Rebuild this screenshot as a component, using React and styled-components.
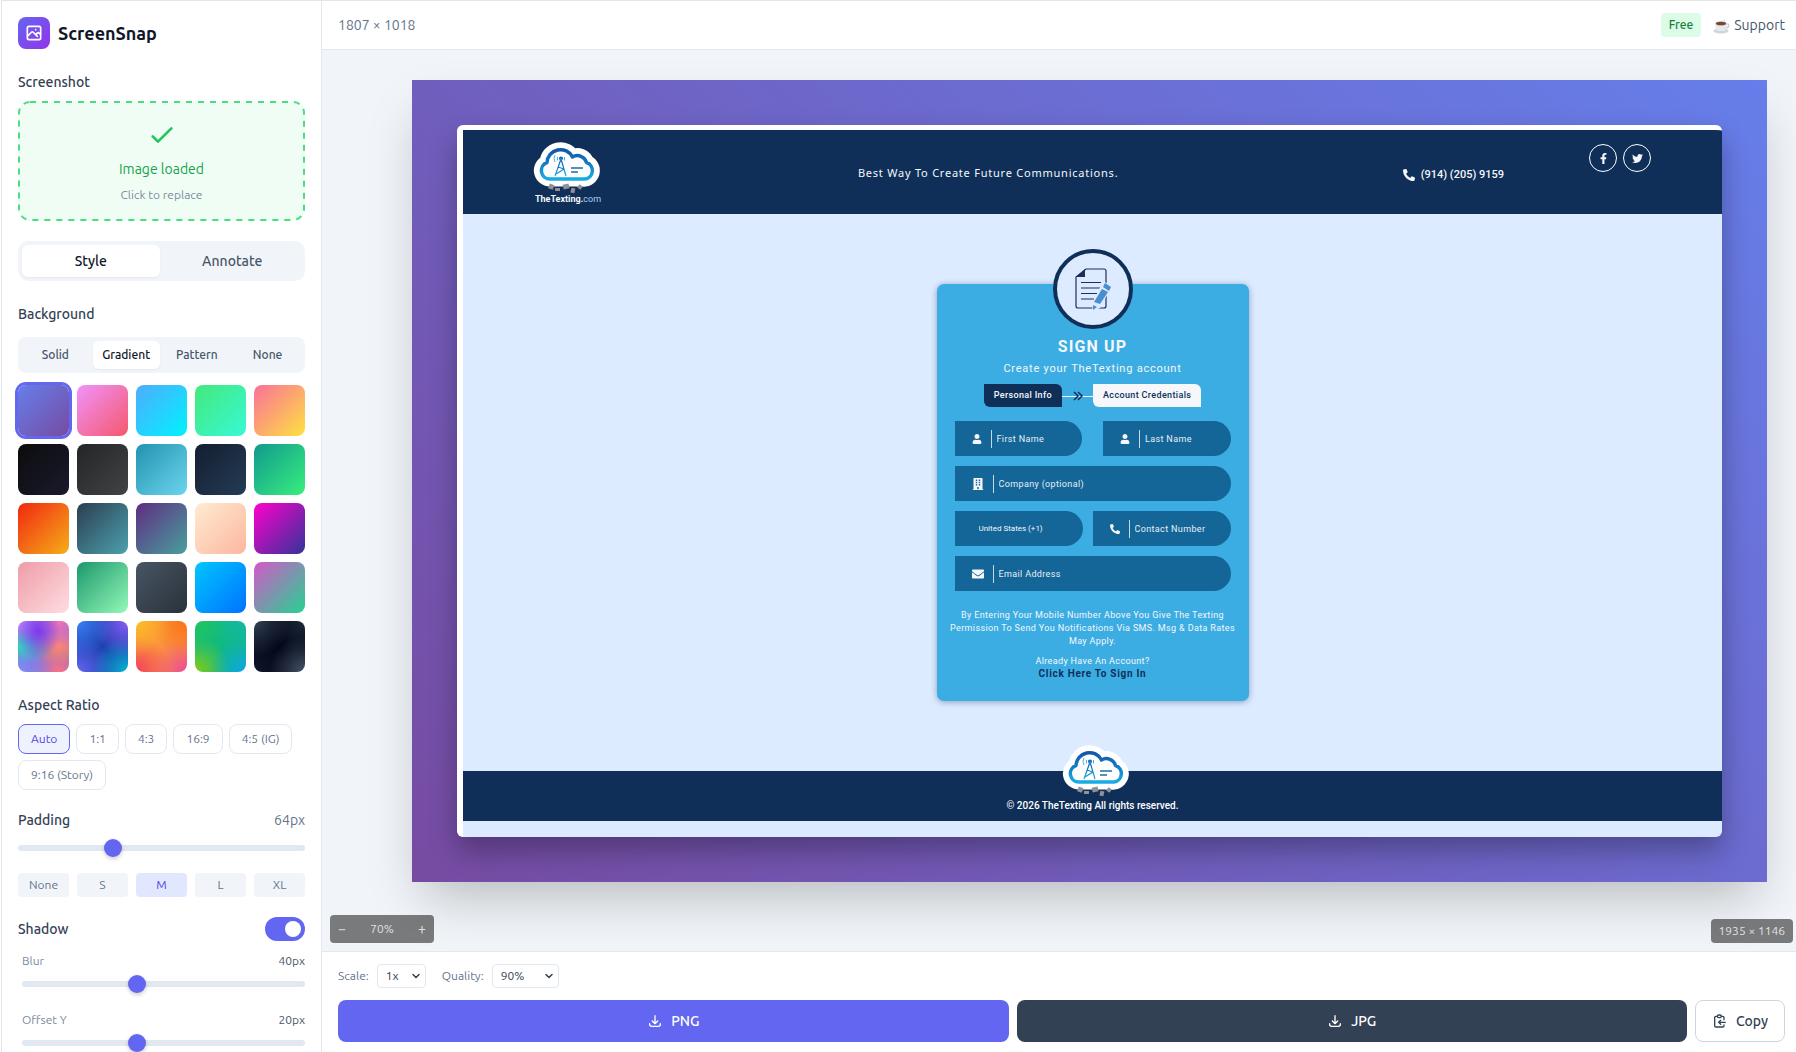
import React, { useState } from "react";
import styled, { createGlobalStyle, css } from 'styled-components';
import { ChevronDown } from "lucide-react";
import { FaBuilding, FaEnvelope, FaFacebookF, FaPhoneAlt, FaTwitter, FaUser } from "react-icons/fa";

const gradients = [
    'linear-gradient(135deg, #667eea, #764ba2)',
    'linear-gradient(135deg, #f093fb, #f5576c)',
    'linear-gradient(135deg, #4facfe, #00f2fe)',
    'linear-gradient(135deg, #43e97b, #38f9d7)',
    'linear-gradient(135deg, #fa709a, #fee140)',
    'linear-gradient(135deg, #0c0c0c, #1a1a2e)',
    'linear-gradient(135deg, #232526, #414345)',
    'linear-gradient(135deg, #2193b0, #6dd5ed)',
    'linear-gradient(135deg, #141e30, #243b55)',
    'linear-gradient(135deg, #11998e, #38ef7d)',
    'linear-gradient(135deg, #f12711, #f5af19)',
    'linear-gradient(135deg, #2c3e50, #4ca1af)',
    'linear-gradient(135deg, #5f2c82, #49a09d)',
    'linear-gradient(135deg, #ffecd2, #fcb69f)',
    'linear-gradient(135deg, #ff00cc, #333399)',
    'linear-gradient(135deg, #ee9ca7, #ffdde1)',
    'linear-gradient(135deg, #1d976c, #93f9b9)',
    'linear-gradient(135deg, #485563, #29323c)',
    'linear-gradient(135deg, #00c6ff, #0072ff)',
    'linear-gradient(135deg, #d558c8, #24d292)',
    'radial-gradient(at 40% 20%, #7c3aed 0, transparent 50%), radial-gradient(at 80% 0%, #f472b6 0, transparent 50%), radial-gradient(at 0% 50%, #2dd4bf 0, transparent 50%), radial-gradient(at 80% 50%, #fb8c5a 0, transparent 50%), radial-gradient(at 0% 100%, #818cf8 0, transparent 50%), radial-gradient(at 80% 100%, #fb7185 0, transparent 50%), radial-gradient(at 0% 0%, #c084fc 0, transparent 50%), #7c6fd8',
    'radial-gradient(at 0% 0%, #3b82f6 0, transparent 50%), radial-gradient(at 100% 0%, #8b5cf6 0, transparent 50%), radial-gradient(at 100% 100%, #06b6d4 0, transparent 50%), radial-gradient(at 0% 100%, #6366f1 0, transparent 50%), #1e40af',
    'radial-gradient(at 0% 0%, #fbbf24 0, transparent 50%), radial-gradient(at 100% 0%, #f97316 0, transparent 50%), radial-gradient(at 100% 100%, #ec4899 0, transparent 50%), radial-gradient(at 0% 100%, #f43f5e 0, transparent 50%), #fb923c',
    'radial-gradient(at 0% 0%, #22c55e 0, transparent 50%), radial-gradient(at 100% 0%, #14b8a6 0, transparent 50%), radial-gradient(at 100% 100%, #0ea5e9 0, transparent 50%), radial-gradient(at 0% 100%, #84cc16 0, transparent 50%), #10b981',
    'radial-gradient(at 0% 0%, #334155 0, transparent 50%), radial-gradient(at 100% 0%, #1e293b 0, transparent 50%), radial-gradient(at 100% 100%, #475569 0, transparent 50%), radial-gradient(at 0% 100%, #0f172a 0, transparent 50%), #020617',
]

const ratios = ['Auto', '1:1', '4:3', '16:9', '4:5 (IG)', '9:16 (Story)']
const paddings = [['None', 0], ['S', 32], ['M', 64], ['L', 96], ['XL', 128]]

function Icon({ size, d, width = 2 }) {
    return (
        <svg width={size} height={size} viewBox="0 0 24 24" fill="none" stroke="currentColor" strokeWidth={width} strokeLinecap="round" strokeLinejoin="round" aria-hidden="true">
            <path d={d} />
        </svg>
    )
}

const photoPath = "M4 16l4.586-4.586a2 2 0 012.828 0L16 16m-2-2l1.586-1.586a2 2 0 012.828 0L20 14m-6-6h.01M6 20h12a2 2 0 002-2V6a2 2 0 00-2-2H6a2 2 0 00-2 2v12a2 2 0 002 2z"
const downloadPath = "M4 16v1a3 3 0 003 3h10a3 3 0 003-3v-1m-4-4l-4 4m0 0l-4-4m4 4V4"
const copyPath = "M8 5H6a2 2 0 00-2 2v12a2 2 0 002 2h10a2 2 0 002-2v-1M8 5a2 2 0 002 2h2a2 2 0 002-2M8 5a2 2 0 012-2h2a2 2 0 012 2m0 0h2a2 2 0 012 2v3m2 4H10m0 0l3-3m-3 3l3 3"

function CloudLogo({ id }) {
    const cloud = "M17 38H52a8.500 8.500 0 0 0 1.500-16.500a9.500 9.500 0 0 0-14-5.500a13.500 13.500 0 0 0-25.500 5.500a8.500 8.500 0 0 0 3 16.500z"
    return (
        <svg width="70" height="53" viewBox="0 0 70 53" fill="none" aria-hidden="true">
            <defs>
                <linearGradient id={id} x1="0" y1="0" x2="0" y2="1">
                    <stop offset="0" stopColor="#1257a8" />
                    <stop offset="0.5" stopColor="#157fc4" />
                    <stop offset="1" stopColor="#19ace4" />
                </linearGradient>
            </defs>
            <path d={cloud} fill="#fff" stroke="#fff" strokeWidth="15" strokeLinejoin="round" />
            <path d="M17 40H52V45.500H46L30 43L17 45.500z" fill="#fff" />
            <path d={cloud} stroke={`url(#${id})`} strokeWidth="3.500" strokeLinejoin="round" />
            <g fill="#8f9194">
                <rect x="16" y="43" width="5" height="5" transform="rotate(20 18 45)" />
                <rect x="22" y="47" width="5" height="3" />
                <rect x="30" y="43" width="6" height="5" transform="rotate(-12 33 45)" />
                <rect x="38" y="47" width="4" height="5" transform="rotate(12 40 49)" />
                <rect x="45" y="44" width="4" height="4" transform="rotate(35 47 46)" />
            </g>
            <g stroke={`url(#${id})`} strokeWidth="1.200">
                <path d="M28 18L22 35M28 18L33 35M25 26L31 28M31 28L23 33" />
                <circle cx="28" cy="17.500" r="1.500" fill="#1672b8" />
            </g>
            <path d="M24.500 16v3.500M31.500 16v3.500M22 14q-2 3.500 0 7" stroke="#4bb0dc" />
            <path d="M38 27H50M38 31H45" stroke="#1c6f9f" strokeWidth="1.500" />
        </svg>
    )
}

function DocumentIcon() {
    return (
        <svg width="38" height="44" viewBox="0 0 38 44" fill="none" aria-hidden="true">
            <path d="M12 2H30Q32 2 32 4V39Q32 41 30 41H4Q2 41 2 39V10z" stroke="#1f2d5c" strokeWidth="1.200" />
            <path d="M11 2V10H2z" fill="#1f2d5c" />
            <path d="M7 15.500H27M7 21H27M7 26.500H23M7 32H20" stroke="#1f2d5c" strokeWidth="1.200" />
            <path d="M18 44l1-9L29 14l9 5L26 41z" fill="#dcebff" />
            <path d="M20 35L28 22L34 25L26 37z" fill="#478dcf" />
            <path d="M29 20L31 16L37 20L35 24z" fill="#478dcf" />
            <path d="M19 38V43L23 40z" fill="#478dcf" />
        </svg>
    )
}

function CupIcon() {
    return (
        <svg width="17" height="17" viewBox="0 0 17 17" fill="none" aria-hidden="true">
            <path d="M9 4Q12 3 11 1Q13 3 11 5" fill="#dde3e8" />
            <ellipse cx="8" cy="14" rx="7.500" ry="2.400" fill="#cfd5da" />
            <path d="M13 7h2q2 2-1 4h-2" stroke="#c4cbd0" strokeWidth="1.200" />
            <path d="M2 6h12q0 6-3 8H5Q2 12 2 6z" fill="#e6eaed" />
            <ellipse cx="8" cy="6.500" rx="6" ry="2.400" fill="#d3d8dc" />
            <ellipse cx="8" cy="6.500" rx="5" ry="1.800" fill="#7a4334" />
        </svg>
    )
}

function TextField({ id, icon, label, type = 'text' }) {
    return (
        <Field>
            <FieldLabel htmlFor={id} aria-label={label}>{icon}</FieldLabel>
            <FieldInput id={id} type={type} placeholder={label} />
        </Field>
    )
}

function SignupPage() {
    return (
        <Shot>
            <SiteHeader>
                <Brand>
                    <CloudLogo id="cloudTop" />
                    <BrandName>TheTexting.<span>com</span></BrandName>
                </Brand>
                <Tagline>Best Way To Create Future Communications.</Tagline>
                <Phone><FaPhoneAlt size={12} />(914) (205) 9159</Phone>
                <Socials>
                    <SocialLink href="#facebook" aria-label="Facebook"><FaFacebookF size={11} /></SocialLink>
                    <SocialLink href="#twitter" aria-label="Twitter"><FaTwitter size={11} /></SocialLink>
                </Socials>
            </SiteHeader>
            <SiteBody>
                <SignupCard>
                    <CardBadge><DocumentIcon /></CardBadge>
                    <CardTitle>SIGN UP</CardTitle>
                    <CardSubtitle>Create your TheTexting account</CardSubtitle>
                    <Steps>
                        <Step $active>Personal Info</Step>
                        <StepLine>
                            <svg width="31" height="10" viewBox="0 0 31 10" fill="none" aria-hidden="true">
                                <path d="M0 5.500H31" stroke="#f5f7fa" />
                                <path d="M12 1l4 4l-4 4M16 1l4 4l-4 4" stroke="#0f2f59" strokeWidth="1.500" />
                            </svg>
                        </StepLine>
                        <Step>Account Credentials</Step>
                    </Steps>
                    <Fields>
                        <FieldRow $gap="21px">
                            <TextField id="first" icon={<FaUser size={10} />} label="First Name" />
                            <TextField id="last" icon={<FaUser size={10} />} label="Last Name" />
                        </FieldRow>
                        <TextField id="company" icon={<FaBuilding size={12} />} label="Company (optional)" />
                        <FieldRow $gap="10px" $wide>
                            <Field>
                                <Country aria-label="Country" defaultValue="us">
                                    <option value="us">United States (+1)</option>
                                </Country>
                            </Field>
                            <TextField id="contact" type="tel" icon={<FaPhoneAlt size={10} />} label="Contact Number" />
                        </FieldRow>
                        <TextField id="email" type="email" icon={<FaEnvelope size={12} />} label="Email Address" />
                    </Fields>
                    <Consent>By Entering Your Mobile Number Above You Give The Texting Permission To Send You Notifications Via SMS. Msg &amp; Data Rates May Apply.</Consent>
                    <Already>Already Have An Account?</Already>
                    <SignInLink href="#signin">Click Here To Sign In</SignInLink>
                </SignupCard>
            </SiteBody>
            <SiteFooter>
                <FooterLogo><CloudLogo id="cloudBottom" /></FooterLogo>
                © 2026 TheTexting All rights reserved.
            </SiteFooter>
        </Shot>
    )
}

export default function App() {
    const [tab, setTab] = useState('Style')
    const [bgType, setBgType] = useState('Gradient')
    const [gradient, setGradient] = useState(0)
    const [ratio, setRatio] = useState('Auto')
    const [padding, setPadding] = useState(64)
    const [shadow, setShadow] = useState(true)
    const [blur, setBlur] = useState(40)
    const [offset, setOffset] = useState(20)

    return (
        <>
            <GlobalStyle />
            <Layout>
                <Sidebar>
                    <Logo>
                        <LogoMark><Icon size={20} d={photoPath} /></LogoMark>
                        <h1>ScreenSnap</h1>
                    </Logo>

                    <Section $space="20px">
                        <Label>Screenshot</Label>
                        <DropZone type="button">
                            <DashedEdge aria-hidden="true"><rect /></DashedEdge>
                            <Icon size={32} d="M5 13l4 4L19 7" />
                            <strong>Image loaded</strong>
                            <small>Click to replace</small>
                        </DropZone>
                    </Section>

                    <Tabs>
                        {['Style', 'Annotate'].map((name) =>
                            <Tab key={name} $active={tab === name} onClick={() => setTab(name)}>{name}</Tab>
                        )}
                    </Tabs>

                    <Section $space="24px">
                        <Label $space="14px">Background</Label>
                        <Tabs $small>
                            {['Solid', 'Gradient', 'Pattern', 'None'].map((name) =>
                                <Tab key={name} $small $active={bgType === name} onClick={() => setBgType(name)}>{name}</Tab>
                            )}
                        </Tabs>
                        <Swatches>
                            {gradients.map((bg, i) =>
                                <Swatch key={bg} aria-label={`Gradient ${i + 1}`} $bg={bg} $active={gradient === i} onClick={() => setGradient(i)} />
                            )}
                        </Swatches>
                    </Section>

                    <Section $space="20px">
                        <Label>Aspect Ratio</Label>
                        <Ratios>
                            {ratios.map((name) =>
                                <Ratio key={name} $active={ratio === name} onClick={() => setRatio(name)}>{name}</Ratio>
                            )}
                        </Ratios>
                    </Section>

                    <Section $space="20px">
                        <Between>
                            <Label as="label" htmlFor="padding" $space="0">Padding</Label>
                            <Value>{padding}px</Value>
                        </Between>
                        <Slider id="padding" type="range" min="0" max="200" value={padding} onChange={(e) => setPadding(Number(e.target.value))} />
                        <Swatches>
                            {paddings.map(([name, size]) =>
                                <Preset key={name} $active={padding === size} onClick={() => setPadding(size)}>{name}</Preset>
                            )}
                        </Swatches>
                    </Section>

                    <Between>
                        <Label as="label" htmlFor="shadow" $space="0">Shadow</Label>
                        <Toggle id="shadow" type="checkbox" checked={shadow} onChange={() => setShadow(!shadow)} />
                    </Between>
                    <ShadowOptions>
                        <Between>
                            <SmallLabel htmlFor="blur">Blur</SmallLabel>
                            <Value $small>{blur}px</Value>
                        </Between>
                        <Slider id="blur" type="range" min="0" max="100" value={blur} onChange={(e) => setBlur(Number(e.target.value))} />
                        <Between>
                            <SmallLabel htmlFor="offset">Offset Y</SmallLabel>
                            <Value $small>{offset}px</Value>
                        </Between>
                        <Slider id="offset" type="range" min="0" max="50" value={offset} onChange={(e) => setOffset(Number(e.target.value))} />
                    </ShadowOptions>
                </Sidebar>

                <Main>
                    <TopBar>
                        <span>1807 × 1018</span>
                        <TopRight>
                            <FreeTag>Free</FreeTag>
                            <SupportLink href="#support"><CupIcon />Support</SupportLink>
                        </TopRight>
                    </TopBar>
                    <Canvas>
                        <Frame><SignupPage /></Frame>
                        <ZoomBox>
                            <ZoomButton aria-label="Zoom out">−</ZoomButton>
                            <span>70%</span>
                            <ZoomButton aria-label="Zoom in">+</ZoomButton>
                        </ZoomBox>
                        <SizeTag>1935 × 1146</SizeTag>
                    </Canvas>
                    <ExportBar>
                        <Options>
                            <OptionLabel htmlFor="scale">Scale:</OptionLabel>
                            <SelectBox>
                                <Select id="scale" $width="49px" defaultValue="1x"><option>1x</option><option>2x</option><option>3x</option></Select>
                                <ChevronDown size={12} strokeWidth={3} />
                            </SelectBox>
                            <OptionLabel htmlFor="quality">Quality:</OptionLabel>
                            <SelectBox>
                                <Select id="quality" $width="67px" defaultValue="90%"><option>80%</option><option>90%</option><option>100%</option></Select>
                                <ChevronDown size={12} strokeWidth={3} />
                            </SelectBox>
                        </Options>
                        <Actions>
                            <ExportButton $bg="#6366f1"><Icon size={16} d={downloadPath} />PNG</ExportButton>
                            <ExportButton $bg="#334155"><Icon size={16} d={downloadPath} />JPG</ExportButton>
                            <CopyButton><Icon size={16} d={copyPath} />Copy</CopyButton>
                        </Actions>
                    </ExportBar>
                </Main>
            </Layout>
        </>
    )
}

const GlobalStyle = createGlobalStyle`
* {
  box-sizing: border-box;
}
body {
  margin: 0;
  background: #ffffff;
  font-family: Ubuntu, 'Noto Sans', sans-serif;
  font-size: 14px;
  line-height: 20px;
  color: #334155;
}
button, input, select {
  font: inherit;
  color: inherit;
  margin: 0;
}
button {
  border: 0;
  padding: 0;
  background: none;
  cursor: pointer;
}
h1, h2, p {
  margin: 0;
}
a {
  color: inherit;
  text-decoration: none;
}
svg {
  display: block;
  flex-shrink: 0;
}
`;

const Layout = styled.div`
display: flex;
height: 100vh;
margin-left: 1px;
border-top: 1px solid #e5e5e5;
border-left: 1px solid #e2e4e8;
overflow: hidden;
`;

const Sidebar = styled.aside`
width: 320px;
flex-shrink: 0;
padding: 16px;
border-right: 1px solid #e2e8f0;
overflow: hidden;
`;

const Logo = styled.div`
display: flex;
align-items: center;
gap: 8px;
margin-bottom: 24px;
h1 {
  font-size: 18px;
  line-height: 28px;
  font-weight: 600;
  color: #0f172a;
}
`;

const LogoMark = styled.div`
display: flex;
align-items: center;
justify-content: center;
width: 32px;
height: 32px;
border-radius: 8px;
color: #ffffff;
background: linear-gradient(135deg, #6366f1, #9333ea);
`;

const Section = styled.section`
margin-bottom: ${({ $space }) => $space};
`;

const Label = styled.div`
font-size: 14px;
line-height: 18px;
font-weight: 500;
color: #334155;
margin-bottom: ${({ $space }) => $space || '10px'};
`;

const DropZone = styled.button`
position: relative;
display: flex;
flex-direction: column;
align-items: center;
gap: 8px;
width: 100%;
padding: 18px;
border-radius: 12px;
background: #f0fdf4;
color: #22c55e;
strong {
  font-weight: 400;
  color: #16a34a;
}
small {
  font-size: 12px;
  line-height: 16px;
  color: #7c8a9e;
}
`;

const DashedEdge = styled.svg`
position: absolute;
top: 0;
left: 0;
width: 100%;
height: 100%;
rect {
  x: 1px;
  y: 1px;
  width: calc(100% - 2px);
  height: calc(100% - 2px);
  rx: 11px;
  fill: none;
  stroke: #4ade80;
  stroke-width: 2px;
  stroke-dasharray: 6px 6px;
}
`;

const Tabs = styled.div`
display: flex;
gap: 4px;
padding: 4px;
border-radius: ${({ $small }) => $small ? '8px' : '10px'};
background: #f1f5f9;
margin-bottom: ${({ $small }) => $small ? '12px' : '24px'};
`;

const Tab = styled.button`
flex: 1 1 0;
height: ${({ $small }) => $small ? '28px' : '32px'};
border-radius: 6px;
font-size: ${({ $small }) => $small ? '12px' : '14px'};
font-weight: 500;
color: #475569;
${({ $active }) => $active && css`
  background: #ffffff;
  color: #0f172a;
  box-shadow: 0 1px 2px rgba(0, 0, 0, 0.05);
`}
`;

const Swatches = styled.div`
display: grid;
grid-template-columns: repeat(5, 1fr);
gap: 8px;
`;

const Swatch = styled.button`
aspect-ratio: 1;
border-radius: 8px;
background: ${({ $bg }) => $bg};
box-shadow: ${({ $active }) => $active ? '0 0 0 3px #6366f1' : 'none'};
`;

const Ratios = styled.div`
display: flex;
flex-wrap: wrap;
gap: 6px;
`;

const Ratio = styled.button`
padding: 6px 12px;
border: 1px solid ${({ $active }) => $active ? '#6366f1' : '#e2e8f0'};
border-radius: 8px;
background: ${({ $active }) => $active ? '#eef2ff' : '#ffffff'};
color: ${({ $active }) => $active ? '#4f46e5' : '#64748b'};
font-size: 12px;
line-height: 16px;
`;

const Between = styled.div`
display: flex;
align-items: center;
justify-content: space-between;
`;

const Value = styled.span`
font-size: ${({ $small }) => $small ? '12px' : '14px'};
line-height: ${({ $small }) => $small ? '16px' : '20px'};
color: ${({ $small }) => $small ? '#475569' : '#64748b'};
`;

const Slider = styled.input`
appearance: none;
display: block;
width: 100%;
height: 6px;
margin: 15px 0 22px;
border-radius: 3px;
background: #e2e8f0;
&::-webkit-slider-thumb {
  appearance: none;
  width: 18px;
  height: 18px;
  border-radius: 50%;
  background: #6366f1;
  box-shadow: 0 2px 4px rgba(0, 0, 0, 0.2);
}
`;

const Preset = styled.button`
height: 24px;
border-radius: 4px;
font-size: 12px;
line-height: 16px;
background: ${({ $active }) => $active ? '#e0e7ff' : '#f1f5f9'};
color: ${({ $active }) => $active ? '#4f46e5' : '#64748b'};
`;

const Toggle = styled.input`
appearance: none;
display: flex;
justify-content: ${({ checked }) => checked ? 'flex-end' : 'flex-start'};
width: 40px;
height: 24px;
padding: 4px;
border-radius: 12px;
background: ${({ checked }) => checked ? '#6366f1' : '#cbd5e1'};
cursor: pointer;
&::before {
  content: '';
  width: 16px;
  height: 16px;
  border-radius: 50%;
  background: #ffffff;
}
`;

const ShadowOptions = styled.div`
padding: 12px 0 0 4px;
${Slider} {
  margin: 12px 0 25px;
}
`;

const SmallLabel = styled.label`
font-size: 12px;
line-height: 16px;
color: #7c8a9e;
`;

const Main = styled.main`
flex: 1;
min-width: 0;
display: flex;
flex-direction: column;
`;

const TopBar = styled.header`
display: flex;
align-items: center;
justify-content: space-between;
height: 49px;
padding: 0 11px 0 16px;
border-bottom: 1px solid #e2e8f0;
color: #64748b;
`;

const TopRight = styled.div`
display: flex;
align-items: center;
gap: 12px;
`;

const FreeTag = styled.span`
padding: 4px 8px;
border-radius: 4px;
background: #dcfce7;
color: #15803d;
font-size: 12px;
line-height: 16px;
font-weight: 500;
`;

const SupportLink = styled.a`
display: flex;
align-items: center;
gap: 4px;
color: #475569;
`;

const Canvas = styled.div`
position: relative;
flex: 1;
min-height: 0;
padding: 30px 29px 0 90px;
background: #f1f5f9;
overflow: hidden;
`;

const Frame = styled.div`
padding: 45px;
background: linear-gradient(225deg, #667eea, #764ba2);
box-shadow: 0 25px 50px -12px rgba(0, 0, 0, 0.25);
`;

const Shot = styled.div`
border-top: 5px solid #ffffff;
border-left: 6px solid #ffffff;
border-radius: 6px;
padding-bottom: 16px;
background: #dcebff;
box-shadow: 0 14px 28px rgba(0, 0, 0, 0.3);
overflow: hidden;
font-family: Roboto, sans-serif;
`;

const SiteHeader = styled.div`
display: grid;
grid-template-columns: 29% 1fr auto auto;
align-items: center;
height: 84px;
padding: 11px 71px 9px;
background: #0f2f59;
color: #f5f7fa;
`;

const Brand = styled.div`
width: 68px;
display: flex;
flex-direction: column;
align-items: center;
`;

const BrandName = styled.div`
font-size: 9px;
line-height: 11px;
font-weight: 700;
span {
  font-weight: 400;
  color: #a9cdf0;
}
`;

const Tagline = styled.p`
font-family: 'Noto Sans', sans-serif;
font-size: 11px;
line-height: 16px;
letter-spacing: 0.07em;
`;

const Phone = styled.div`
display: flex;
align-items: center;
gap: 6px;
margin-right: 85px;
padding-top: 3px;
font-size: 11px;
line-height: 16px;
font-weight: 500;
`;

const Socials = styled.div`
display: flex;
gap: 6px;
align-self: start;
padding-top: 3px;
`;

const SocialLink = styled.a`
display: flex;
align-items: center;
justify-content: center;
width: 28px;
height: 28px;
border: 1px solid #ffffff;
border-radius: 50%;
`;

const SiteBody = styled.div`
padding: 70px 0;
`;

const SignupCard = styled.form`
position: relative;
display: flex;
flex-direction: column;
align-items: center;
width: 312px;
margin: 0 auto;
padding: 53px 10px 21px;
border-radius: 7px;
background: #3bade3;
box-shadow: 0 1px 6px rgba(15, 47, 89, 0.4);
color: #f5f7fa;
font-size: 9px;
line-height: 13px;
letter-spacing: 0.04em;
text-align: center;
`;

const CardBadge = styled.div`
position: absolute;
top: -35px;
display: flex;
align-items: center;
justify-content: center;
width: 80px;
height: 80px;
border: 4px solid #0f2f59;
border-radius: 50%;
background: #dcebff;
`;

const CardTitle = styled.h2`
font-size: 16px;
line-height: 20px;
font-weight: 700;
letter-spacing: 0.07em;
`;

const CardSubtitle = styled.p`
margin: 4px 0 7px;
font-size: 11px;
line-height: 16px;
letter-spacing: 0.07em;
`;

const Steps = styled.div`
display: flex;
align-items: center;
margin-bottom: 14px;
`;

const Step = styled.div`
height: 23px;
padding: 5px 10px;
border-radius: 0 6px 0 6px;
background: ${({ $active }) => $active ? '#0f2f59' : '#f5f7fa'};
color: ${({ $active }) => $active ? '#f5f7fa' : '#0f2f59'};
font-weight: 500;
`;

const StepLine = styled.div`
width: 31px;
`;

const Fields = styled.div`
display: flex;
flex-direction: column;
gap: 10px;
align-self: stretch;
padding: 0 8px;
`;

const FieldRow = styled.div`
display: grid;
grid-template-columns: ${({ $wide }) => $wide ? '128px minmax(0, 1fr)' : 'repeat(2, minmax(0, 1fr))'};
gap: ${({ $gap }) => $gap};
`;

const Field = styled.div`
display: flex;
align-items: center;
height: 35px;
padding-left: 17px;
border-radius: 0 18px 18px 0;
background: #156698;
`;

const FieldLabel = styled.label`
display: flex;
align-items: center;
height: 18px;
padding-right: 9px;
border-right: 1px solid #c5d8e6;
`;

const FieldInput = styled.input`
flex: 1;
min-width: 0;
height: 100%;
padding: 0 0 0 5px;
border: 0;
background: none;
outline: 0;
letter-spacing: inherit;
&::placeholder {
  color: #e6eef5;
  opacity: 1;
}
`;

const Country = styled.select`
appearance: none;
width: 100%;
padding: 0 0 0 7px;
border: 0;
background: none;
font-size: 8px;
`;

const Consent = styled.p`
margin: 18px 0 7px;
`;

const Already = styled.p`
line-height: 12px;
`;

const SignInLink = styled.a`
font-size: 10px;
font-weight: 700;
letter-spacing: 0.07em;
color: #0f2f59;
`;

const SiteFooter = styled.div`
position: relative;
display: flex;
justify-content: center;
height: 50px;
padding-top: 28px;
background: #0f2f59;
color: #ffffff;
font-size: 10px;
line-height: 14px;
font-weight: 500;
`;

const FooterLogo = styled.div`
position: absolute;
top: -27px;
left: calc(50% - 31px);
`;

const ZoomBox = styled.div`
position: absolute;
left: 8px;
bottom: 8px;
display: flex;
align-items: center;
justify-content: space-between;
width: 104px;
padding: 4px 8px;
border-radius: 4px;
background: rgba(0, 0, 0, 0.5);
color: #ffffffcc;
font-size: 12px;
`;

const ZoomButton = styled.button`
width: 8px;
font-size: 14px;
line-height: 20px;
`;

const SizeTag = styled.div`
position: absolute;
right: 3px;
bottom: 8px;
padding: 4px 8px;
border-radius: 4px;
background: rgba(0, 0, 0, 0.5);
color: #ffffffcc;
font-size: 12px;
line-height: 16px;
`;

const ExportBar = styled.footer`
padding: 12px 11px 10px 16px;
border-top: 1px solid #e2e8f0;
background: #ffffff;
`;

const Options = styled.div`
display: flex;
align-items: center;
gap: 8px;
margin-bottom: 12px;
`;

const OptionLabel = styled.label`
font-size: 12px;
line-height: 16px;
color: #64748b;
div + & {
  margin-left: 8px;
}
`;

const SelectBox = styled.div`
position: relative;
svg {
  position: absolute;
  top: 6px;
  right: 4px;
  pointer-events: none;
}
`;

const Select = styled.select`
appearance: none;
display: block;
width: ${({ $width }) => $width};
height: 24px;
padding: 0 8px;
border: 1px solid #e2e8f0;
border-radius: 4px;
background: #ffffff;
font-size: 12px;
line-height: 16px;
`;

const Actions = styled.div`
display: flex;
gap: 8px;
`;

const ExportButton = styled.button`
flex: 1;
display: flex;
align-items: center;
justify-content: center;
gap: 8px;
height: 42px;
border-radius: 8px;
background: ${({ $bg }) => $bg};
color: #ffffff;
font-weight: 500;
`;

const CopyButton = styled(ExportButton)`
flex: 0 0 90px;
border: 1px solid #cbd5e1;
background: #ffffff;
color: #334155;
`;
